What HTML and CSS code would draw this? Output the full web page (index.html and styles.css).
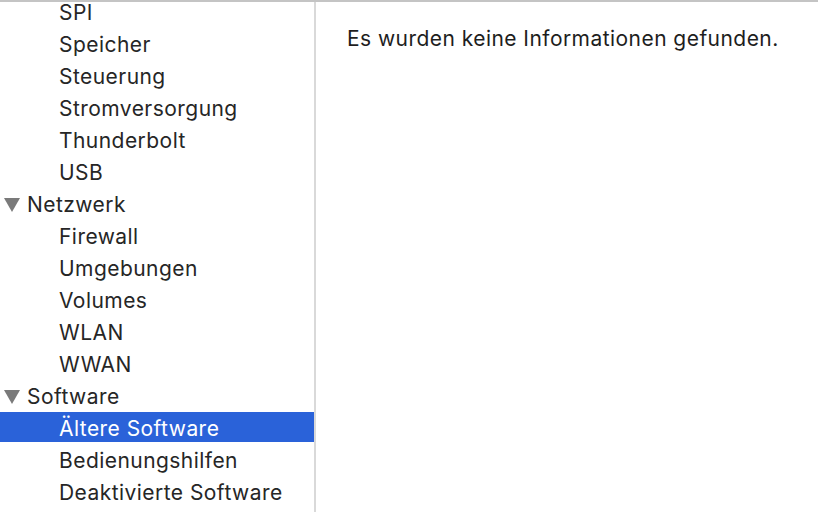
FILE: index.html
```html
<!DOCTYPE html>
<html lang="de">
<head>
<meta charset="utf-8">
<link rel="stylesheet" href="styles.css">
</head>
<body>
<div class="window">
  <nav class="sidebar">
    <ul class="tree">
      <li class="item child">SPI</li>
      <li class="item child">Speicher</li>
      <li class="item child">Steuerung</li>
      <li class="item child">Stromversorgung</li>
      <li class="item child">Thunderbolt</li>
      <li class="item child">USB</li>
      <li class="item group"><span class="disclosure"></span>Netzwerk</li>
      <li class="item child">Firewall</li>
      <li class="item child">Umgebungen</li>
      <li class="item child">Volumes</li>
      <li class="item child">WLAN</li>
      <li class="item child">WWAN</li>
      <li class="item group"><span class="disclosure"></span>Software</li>
      <li class="item child selected">Ältere Software</li>
      <li class="item child">Bedienungshilfen</li>
      <li class="item child">Deaktivierte Software</li>
    </ul>
  </nav>
  <main class="detail">
    <p class="message">Es wurden keine Informationen gefunden.</p>
  </main>
</div>
</body>
</html>
```
FILE: styles.css
```css
html, body {
  margin: 0;
  padding: 0;
  height: 100%;
  background: #ffffff;
}
body {
  font-family: Inter, "Liberation Sans", sans-serif;
  color: #262626;
  overflow: hidden;
}
.window {
  display: flex;
  height: 100%;
  border-top: 2px solid #c4c4c4;
  box-sizing: border-box;
}
.sidebar {
  width: 314px;
  flex: none;
  border-right: 2px solid #d9d9d9;
  overflow: hidden;
}
.tree {
  list-style: none;
  margin: -6px 0 0 0;
  padding: 0;
}
.item {
  height: 32px;
  box-sizing: border-box;
  padding-top: 2px;
  line-height: 30px;
  font-size: 21px;
  letter-spacing: 0.45px;
  white-space: nowrap;
  display: flex;
  align-items: flex-start;
}
.child {
  padding-left: 59px;
}
.group {
  padding-left: 4px;
}
.disclosure {
  width: 0;
  height: 0;
  border-left: 8px solid transparent;
  border-right: 8px solid transparent;
  border-top: 14px solid #7a7a7a;
  margin: 8px 7px 0 0;
}
.selected {
  background: linear-gradient(#2a62d9, #2a62d9) 0 0 / 100% 30px no-repeat;
  color: #ffffff;
}
.detail {
  flex: 1;
}
.message {
  margin: 22px 0 0 31px;
  font-size: 21px;
  letter-spacing: 0.45px;
  line-height: 30px;
  color: #1e1e1e;
}
```
